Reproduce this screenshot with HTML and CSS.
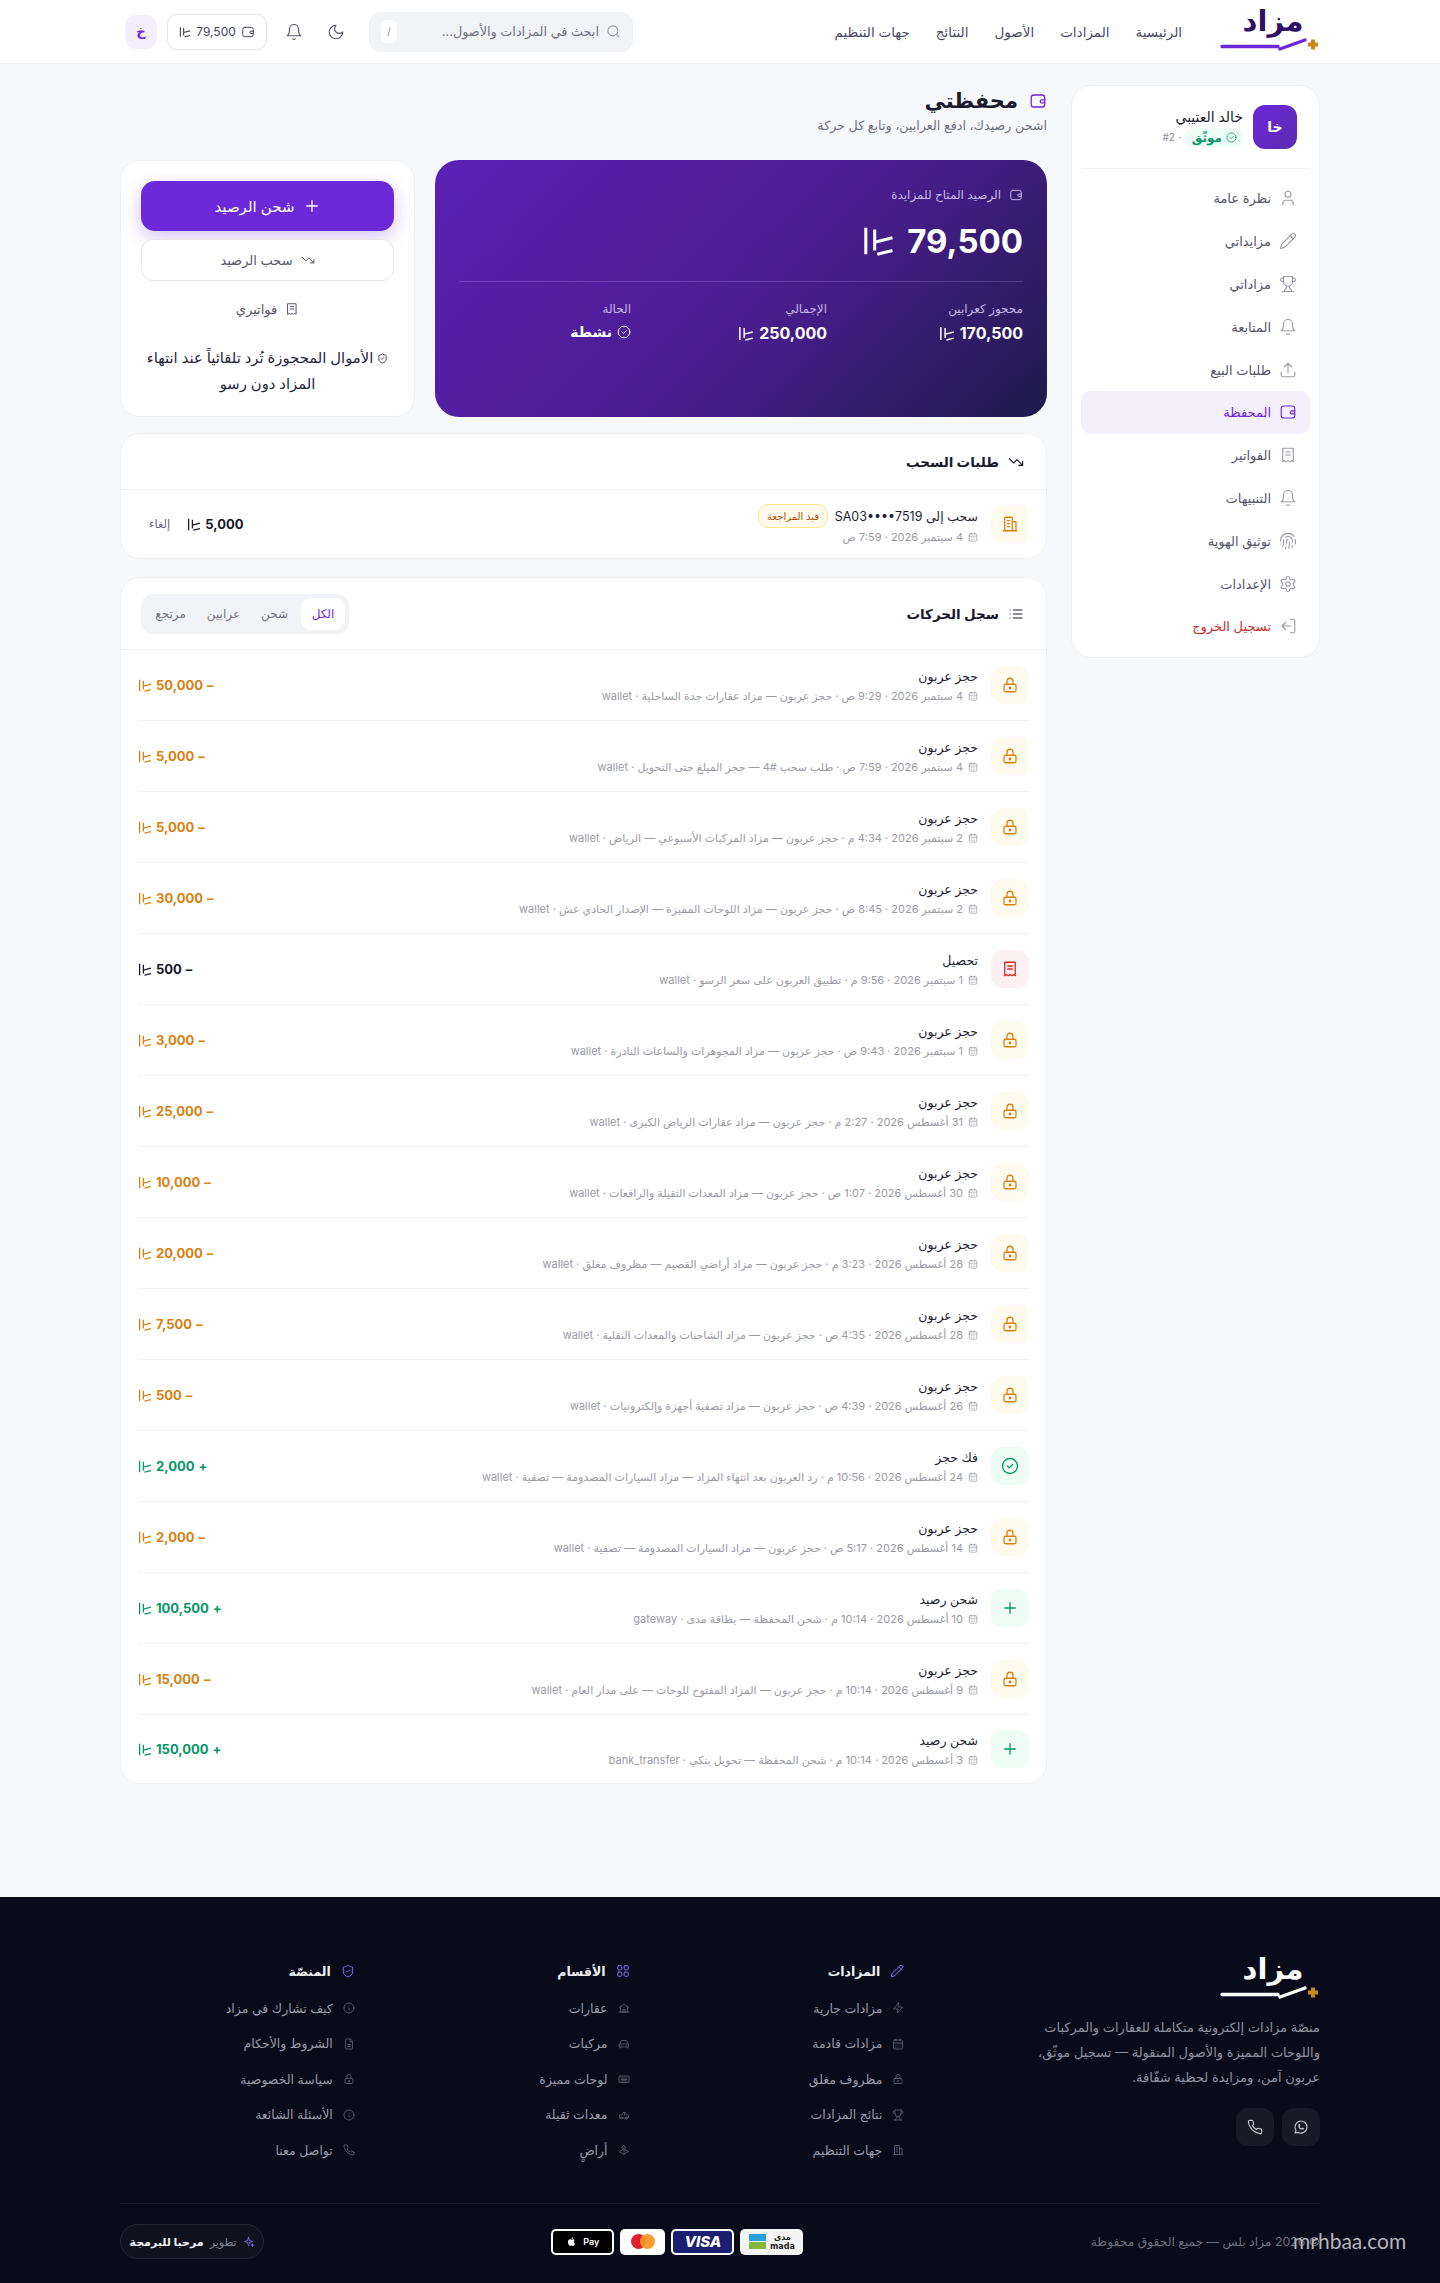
FILE: index.html
```html
<!DOCTYPE html>
<html lang="ar" dir="rtl">
<head>
  <meta charset="UTF-8" />
  <meta name="viewport" content="width=device-width, initial-scale=1.0" />
  <title>محفظتي - مزاد</title>
  <link rel="stylesheet" href="styles.css">
</head>
<body>
  <svg class="sprite" width="0" height="0" aria-hidden="true">
    <defs>
      <symbol id="i-sar" viewBox="0 0 26 24"><path d="M3 1.500v21M10 3v16.500M10 13l14-3.500M12 22.500l12-3" /></symbol>
      <symbol id="i-wallet" viewBox="0 0 24 24"><rect x="3" y="4" width="18" height="16" rx="3.500" /><path d="M21 10.500h-4a2 2 0 0 0 0 4h4" /></symbol>
      <symbol id="i-lock" viewBox="0 0 24 24"><rect x="4" y="11" width="16" height="10" rx="2" /><path d="M8 11V7a4 4 0 0 1 8 0v4" /><circle cx="12" cy="16" r="1" /></symbol>
      <symbol id="i-bell" viewBox="0 0 24 24"><path d="M6 8a6 6 0 0 1 12 0c0 7 3 9 3 9H3s3-2 3-9" /><path d="M10.300 21a1.940 1.940 0 0 0 3.400 0" /></symbol>
      <symbol id="i-moon" viewBox="0 0 24 24"><path d="M12 3a6 6 0 0 0 9 9 9 9 0 1 1-9-9Z" /></symbol>
      <symbol id="i-search" viewBox="0 0 24 24"><circle cx="11" cy="11" r="8" /><path d="m21 21-4.300-4.300" /></symbol>
      <symbol id="i-user" viewBox="0 0 24 24"><path d="M19 21v-2a4 4 0 0 0-4-4H9a4 4 0 0 0-4 4v2" /><circle cx="12" cy="7" r="4" /></symbol>
      <symbol id="i-pencil" viewBox="0 0 24 24"><path d="M17 3a2.850 2.830 0 1 1 4 4L7.500 20.500 2 22l1.500-5.500Z" /><path d="m15 5 4 4" /></symbol>
      <symbol id="i-trophy" viewBox="0 0 24 24"><path d="M6 9H4.500a2.500 2.500 0 0 1 0-5H6M18 9h1.500a2.500 2.500 0 0 0 0-5H18M4 22h16M10 15v2c0 .550-.470.980-.970 1.210C7.850 18.750 7 20.240 7 22M14 15v2c0 .550.470.980.970 1.210 1.180.540 2.030 2.030 2.030 3.790" /><path d="M18 2H6v7a6 6 0 0 0 12 0V2Z" /></symbol>
      <symbol id="i-upload" viewBox="0 0 24 24"><path d="M21 15v4a2 2 0 0 1-2 2H5a2 2 0 0 1-2-2v-4M17 8l-5-5-5 5M12 3v12" /></symbol>
      <symbol id="i-receipt" viewBox="0 0 24 24"><path d="M5 3h14v18l-2.300-1.500-2.300 1.500-2.400-1.500L9.600 21l-2.300-1.500L5 21Z" /><path d="M9 8h6M9 12h6" /></symbol>
      <symbol id="i-finger" viewBox="0 0 24 24"><path d="M12 10a2 2 0 0 0-2 2c0 1.020-.1 2.510-.260 4M14 13.120c0 2.380 0 6.380-1 8.880M17.290 21.020c.120-.6.430-2.300.5-3.020M2 12a10 10 0 0 1 18-6M2 16h.01M21.800 16c.2-2 .131-5.354 0-6M5 19.500C5.500 18 6 15 6 12a6 6 0 0 1 .340-2M8.650 22c.210-.660.450-1.320.570-2M9 6.800a6 6 0 0 1 9 5.200v2" /></symbol>
      <symbol id="i-gear" viewBox="0 0 24 24"><path d="M12.220 2h-.440a2 2 0 0 0-2 2v.180a2 2 0 0 1-1 1.730l-.430.250a2 2 0 0 1-2 0l-.150-.080a2 2 0 0 0-2.730.730l-.220.380a2 2 0 0 0 .730 2.730l.150.1a2 2 0 0 1 1 1.720v.510a2 2 0 0 1-1 1.740l-.150.090a2 2 0 0 0-.730 2.730l.220.380a2 2 0 0 0 2.730.730l.150-.080a2 2 0 0 1 2 0l.430.250a2 2 0 0 1 1 1.730V20a2 2 0 0 0 2 2h.440a2 2 0 0 0 2-2v-.180a2 2 0 0 1 1-1.730l.430-.250a2 2 0 0 1 2 0l.150.080a2 2 0 0 0 2.730-.730l.220-.390a2 2 0 0 0-.730-2.730l-.150-.080a2 2 0 0 1-1-1.740v-.5a2 2 0 0 1 1-1.740l.150-.090a2 2 0 0 0 .730-2.730l-.220-.380a2 2 0 0 0-2.730-.730l-.150.080a2 2 0 0 1-2 0l-.430-.250a2 2 0 0 1-1-1.730V4a2 2 0 0 0-2-2z" /><circle cx="12" cy="12" r="3" /></symbol>
      <symbol id="i-logout" viewBox="0 0 24 24"><path d="M15 3h4a2 2 0 0 1 2 2v14a2 2 0 0 1-2 2h-4M9 17l-5-5 5-5M4 12h12" /></symbol>
      <symbol id="i-plus" viewBox="0 0 24 24"><path d="M5 12h14M12 5v14" /></symbol>
      <symbol id="i-trend" viewBox="0 0 24 24"><path d="m22 17-8.500-8.500-5 5L2 7M16 17h6v-6" /></symbol>
      <symbol id="i-list" viewBox="0 0 24 24"><path d="M8 6h13M8 12h13M8 18h13M3 6h.01M3 12h.01M3 18h.01" /></symbol>
      <symbol id="i-building" viewBox="0 0 24 24"><path d="M5 21V4a1 1 0 0 1 1-1h8a1 1 0 0 1 1 1v17M15 9h4a1 1 0 0 1 1 1v11M3 21h18M8.500 7.500h3M8.500 11.500h3M8.500 15.500h3" /></symbol>
      <symbol id="i-check" viewBox="0 0 24 24"><circle cx="12" cy="12" r="10" /><path d="m8.500 12 2.500 2.500 4.500-4.500" /></symbol>
      <symbol id="i-cal" viewBox="0 0 24 24"><rect x="3" y="4" width="18" height="18" rx="2" /><path d="M16 2v4M8 2v4M3 10h18M8 14h.01M12 14h.01M16 14h.01M8 18h.01M12 18h.01M16 18h.01" /></symbol>
      <symbol id="i-shield" viewBox="0 0 24 24"><path d="M20 13c0 5-3.500 7.500-7.660 8.950a1 1 0 0 1-.670-.010C7.500 20.500 4 18 4 13V6a1 1 0 0 1 1-1c2 0 4.500-1.200 6.240-2.720a1.170 1.170 0 0 1 1.520 0C14.510 3.810 17 5 19 5a1 1 0 0 1 1 1z" /><path d="m9 12 2 2 4-4" /></symbol>
      <symbol id="i-phone" viewBox="0 0 24 24"><path d="M22 16.920v3a2 2 0 0 1-2.180 2 19.790 19.790 0 0 1-8.630-3.070 19.500 19.500 0 0 1-6-6 19.790 19.790 0 0 1-3.070-8.670A2 2 0 0 1 4.110 2h3a2 2 0 0 1 2 1.720c.127.960.361 1.903.7 2.810a2 2 0 0 1-.450 2.110L8.090 9.910a16 16 0 0 0 6 6l1.270-1.270a2 2 0 0 1 2.110-.450c.907.339 1.850.573 2.810.7A2 2 0 0 1 22 16.920z" /></symbol>
      <symbol id="i-whatsapp" viewBox="0 0 24 24"><path d="m3 21 1.650-3.800a9 9 0 1 1 3.400 2.900L3 21" /><path d="M9 10a.5.5 0 0 0 1 0V9a.5.5 0 0 0-1 0v1a5 5 0 0 0 5 5h1a.5.5 0 0 0 0-1h-1a.5.5 0 0 0 0 1" /></symbol>
      <symbol id="i-zap" viewBox="0 0 24 24"><path d="M13 2 3 14h9l-1 8 10-12h-9l1-8z" /></symbol>
      <symbol id="i-grid" viewBox="0 0 24 24"><rect x="3" y="3" width="7" height="7" rx="1.500" /><rect x="14" y="3" width="7" height="7" rx="1.500" /><rect x="3" y="14" width="7" height="7" rx="1.500" /><rect x="14" y="14" width="7" height="7" rx="1.500" /></symbol>
      <symbol id="i-home" viewBox="0 0 24 24"><path d="M3 11 12 4l9 7M5 10v10h14V10M2 20h20M10 20v-5h4v5" /></symbol>
      <symbol id="i-car" viewBox="0 0 24 24"><path d="M4 12 6 6a2 2 0 0 1 2-1h8a2 2 0 0 1 2 1l2 6M3 12h18v6H3zM5 18v2M19 18v2M7 15h.01M17 15h.01" /></symbol>
      <symbol id="i-plate" viewBox="0 0 24 24"><rect x="2" y="6" width="20" height="13" rx="2" /><path d="M6 10h12M6 13h12M6 16h12" /></symbol>
      <symbol id="i-truck" viewBox="0 0 24 24"><path d="M3 17v-5h4l3-5h5l2 5h4v5zM13 7v5" /><circle cx="7" cy="18" r="2" /><circle cx="17" cy="18" r="2" /></symbol>
      <symbol id="i-land" viewBox="0 0 24 24"><path d="m12 3 4 5H8zM3 15l9-5 9 5-9 5zM12 10v10" /></symbol>
      <symbol id="i-info" viewBox="0 0 24 24"><circle cx="12" cy="12" r="10" /><path d="M12 16v-4M12 8h.01" /></symbol>
      <symbol id="i-file" viewBox="0 0 24 24"><path d="M14 2H7a2 2 0 0 0-2 2v16a2 2 0 0 0 2 2h10a2 2 0 0 0 2-2V7zM14 2v5h5M9 13h6M9 17h6" /></symbol>
      <symbol id="i-spark" viewBox="0 0 24 24"><path d="m11 3 2 6 6 2-6 2-2 6-2-6-6-2 6-2zM19 16v5M16.500 18.500h5" /></symbol>
      <symbol id="i-logo" viewBox="0 0 100 14"><path class="logo-line" d="M2 8.500h56M60 11l25-9" /><path class="logo-plus" d="M88 4.500h3v-3h4v3h3v4h-3v3h-4v-3h-3z" /></symbol>
    </defs>
  </svg>

  <header class="topbar">
    <div class="wrap topbar-inner">
      <a class="logo">
        <span class="logo-word">مزاد</span>
        <svg class="logo-mark"><use href="#i-logo" /></svg>
      </a>
      <nav class="topnav">
        <a>الرئيسية</a>
        <a>المزادات</a>
        <a>الأصول</a>
        <a>النتائج</a>
        <a>جهات التنظيم</a>
      </nav>
      <div class="tools">
        <div class="search">
          <svg class="ic"><use href="#i-search" /></svg>
          <span class="search-text">ابحث في المزادات والأصول...</span>
          <kbd>/</kbd>
        </div>
        <svg class="ic tool-ic"><use href="#i-moon" /></svg>
        <svg class="ic tool-ic"><use href="#i-bell" /></svg>
        <div class="bal-pill">
          <svg class="ic"><use href="#i-wallet" /></svg>
          <span>79,500</span>
          <svg class="sar"><use href="#i-sar" /></svg>
        </div>
        <div class="me-chip">خ</div>
      </div>
    </div>
  </header>

  <main class="wrap page">
    <aside class="side card">
      <div class="side-user">
        <div class="avatar">خا</div>
        <div>
          <div class="side-name">خالد العتيبي</div>
          <div class="side-sub">
            <span class="ok-badge"><svg class="ic"><use href="#i-check" /></svg>موثّق</span>
            <span>·</span>
            <span dir="ltr">#2</span>
          </div>
        </div>
      </div>
      <nav class="side-nav">
        <a><svg class="ic"><use href="#i-user" /></svg>نظرة عامة</a>
        <a><svg class="ic"><use href="#i-pencil" /></svg>مزايداتي</a>
        <a><svg class="ic"><use href="#i-trophy" /></svg>مزاداتي</a>
        <a><svg class="ic"><use href="#i-bell" /></svg>المتابعة</a>
        <a><svg class="ic"><use href="#i-upload" /></svg>طلبات البيع</a>
        <a class="active"><svg class="ic"><use href="#i-wallet" /></svg>المحفظة</a>
        <a><svg class="ic"><use href="#i-receipt" /></svg>الفواتير</a>
        <a><svg class="ic"><use href="#i-bell" /></svg>التنبيهات</a>
        <a><svg class="ic"><use href="#i-finger" /></svg>توثيق الهوية</a>
        <a><svg class="ic"><use href="#i-gear" /></svg>الإعدادات</a>
        <a class="logout"><svg class="ic"><use href="#i-logout" /></svg>تسجيل الخروج</a>
      </nav>
    </aside>

    <div class="content">
      <div class="page-head">
        <h1><svg class="ic"><use href="#i-wallet" /></svg>محفظتي</h1>
        <p>اشحن رصيدك، ادفع العرابين، وتابع كل حركة</p>
      </div>

      <div class="bal-grid">
        <section class="bal-card">
          <div class="bal-label"><svg class="ic"><use href="#i-wallet" /></svg>الرصيد المتاح للمزايدة</div>
          <div class="bal-num">79,500 <svg class="sar"><use href="#i-sar" /></svg></div>
          <div class="bal-stats">
            <div>
              <span>محجوز كعرابين</span>
              <b>170,500 <svg class="sar"><use href="#i-sar" /></svg></b>
            </div>
            <div>
              <span>الإجمالي</span>
              <b>250,000 <svg class="sar"><use href="#i-sar" /></svg></b>
            </div>
            <div>
              <span>الحالة</span>
              <b class="state"><svg class="ic"><use href="#i-check" /></svg> نشطة</b>
            </div>
          </div>
        </section>
        <section class="card actions">
          <button class="btn-main"><svg class="ic"><use href="#i-plus" /></svg>شحن الرصيد</button>
          <button class="btn-line"><svg class="ic"><use href="#i-trend" /></svg>سحب الرصيد</button>
          <a class="inv-link"><svg class="ic"><use href="#i-receipt" /></svg>فواتيري</a>
          <p class="note"><svg class="ic"><use href="#i-shield" /></svg> الأموال المحجوزة تُرد تلقائياً عند انتهاء المزاد دون رسو</p>
        </section>
      </div>

      <section class="card panel">
        <div class="panel-head">
          <h2><svg class="ic"><use href="#i-trend" /></svg>طلبات السحب</h2>
        </div>
        <div class="row row-wd">
          <div class="row-ic amber"><svg class="ic"><use href="#i-building" /></svg></div>
          <div class="row-body">
            <div class="row-title">سحب إلى SA03••••7519 <span class="wait">قيد المراجعة</span></div>
            <div class="row-meta"><svg class="ic"><use href="#i-cal" /></svg>4 سبتمبر 2026 · 7:59 ص</div>
          </div>
          <div class="amt dark"><span>5,000</span><svg class="sar"><use href="#i-sar" /></svg></div>
          <a class="cancel">إلغاء</a>
        </div>
      </section>

      <section class="card panel">
        <div class="panel-head panel-head-tall">
          <h2><svg class="ic"><use href="#i-list" /></svg>سجل الحركات</h2>
          <div class="tabs">
            <a class="on">الكل</a>
            <a>شحن</a>
            <a>عرابين</a>
            <a>مرتجع</a>
          </div>
        </div>
        <div class="tx-list">
          <div class="row"><div class="row-ic amber"><svg class="ic"><use href="#i-lock" /></svg></div><div class="row-body"><div class="row-title">حجز عربون</div><div class="row-meta"><svg class="ic"><use href="#i-cal" /></svg>4 سبتمبر 2026 · 9:29 ص · حجز عربون — مزاد عقارات جدة الساحلية · wallet</div></div><div class="amt out"><span>–</span><span>50,000</span><svg class="sar"><use href="#i-sar" /></svg></div></div>
          <div class="row"><div class="row-ic amber"><svg class="ic"><use href="#i-lock" /></svg></div><div class="row-body"><div class="row-title">حجز عربون</div><div class="row-meta"><svg class="ic"><use href="#i-cal" /></svg>4 سبتمبر 2026 · 7:59 ص · طلب سحب #4 — حجز المبلغ حتى التحويل · wallet</div></div><div class="amt out"><span>–</span><span>5,000</span><svg class="sar"><use href="#i-sar" /></svg></div></div>
          <div class="row"><div class="row-ic amber"><svg class="ic"><use href="#i-lock" /></svg></div><div class="row-body"><div class="row-title">حجز عربون</div><div class="row-meta"><svg class="ic"><use href="#i-cal" /></svg>2 سبتمبر 2026 · 4:34 م · حجز عربون — مزاد المركبات الأسبوعي — الرياض · wallet</div></div><div class="amt out"><span>–</span><span>5,000</span><svg class="sar"><use href="#i-sar" /></svg></div></div>
          <div class="row"><div class="row-ic amber"><svg class="ic"><use href="#i-lock" /></svg></div><div class="row-body"><div class="row-title">حجز عربون</div><div class="row-meta"><svg class="ic"><use href="#i-cal" /></svg>2 سبتمبر 2026 · 8:45 ص · حجز عربون — مزاد اللوحات المميزة — الإصدار الحادي عش · wallet</div></div><div class="amt out"><span>–</span><span>30,000</span><svg class="sar"><use href="#i-sar" /></svg></div></div>
          <div class="row"><div class="row-ic red"><svg class="ic"><use href="#i-receipt" /></svg></div><div class="row-body"><div class="row-title">تحصيل</div><div class="row-meta"><svg class="ic"><use href="#i-cal" /></svg>1 سبتمبر 2026 · 9:56 م · تطبيق العربون على سعر الرسو · wallet</div></div><div class="amt dark"><span>–</span><span>500</span><svg class="sar"><use href="#i-sar" /></svg></div></div>
          <div class="row"><div class="row-ic amber"><svg class="ic"><use href="#i-lock" /></svg></div><div class="row-body"><div class="row-title">حجز عربون</div><div class="row-meta"><svg class="ic"><use href="#i-cal" /></svg>1 سبتمبر 2026 · 9:43 ص · حجز عربون — مزاد المجوهرات والساعات النادرة · wallet</div></div><div class="amt out"><span>–</span><span>3,000</span><svg class="sar"><use href="#i-sar" /></svg></div></div>
          <div class="row"><div class="row-ic amber"><svg class="ic"><use href="#i-lock" /></svg></div><div class="row-body"><div class="row-title">حجز عربون</div><div class="row-meta"><svg class="ic"><use href="#i-cal" /></svg>31 أغسطس 2026 · 2:27 م · حجز عربون — مزاد عقارات الرياض الكبرى · wallet</div></div><div class="amt out"><span>–</span><span>25,000</span><svg class="sar"><use href="#i-sar" /></svg></div></div>
          <div class="row"><div class="row-ic amber"><svg class="ic"><use href="#i-lock" /></svg></div><div class="row-body"><div class="row-title">حجز عربون</div><div class="row-meta"><svg class="ic"><use href="#i-cal" /></svg>30 أغسطس 2026 · 1:07 ص · حجز عربون — مزاد المعدات الثقيلة والرافعات · wallet</div></div><div class="amt out"><span>–</span><span>10,000</span><svg class="sar"><use href="#i-sar" /></svg></div></div>
          <div class="row"><div class="row-ic amber"><svg class="ic"><use href="#i-lock" /></svg></div><div class="row-body"><div class="row-title">حجز عربون</div><div class="row-meta"><svg class="ic"><use href="#i-cal" /></svg>28 أغسطس 2026 · 3:23 م · حجز عربون — مزاد أراضي القصيم — مظروف مغلق · wallet</div></div><div class="amt out"><span>–</span><span>20,000</span><svg class="sar"><use href="#i-sar" /></svg></div></div>
          <div class="row"><div class="row-ic amber"><svg class="ic"><use href="#i-lock" /></svg></div><div class="row-body"><div class="row-title">حجز عربون</div><div class="row-meta"><svg class="ic"><use href="#i-cal" /></svg>28 أغسطس 2026 · 4:35 ص · حجز عربون — مزاد الشاحنات والمعدات النقلية · wallet</div></div><div class="amt out"><span>–</span><span>7,500</span><svg class="sar"><use href="#i-sar" /></svg></div></div>
          <div class="row"><div class="row-ic amber"><svg class="ic"><use href="#i-lock" /></svg></div><div class="row-body"><div class="row-title">حجز عربون</div><div class="row-meta"><svg class="ic"><use href="#i-cal" /></svg>26 أغسطس 2026 · 4:39 ص · حجز عربون — مزاد تصفية أجهزة وإلكترونيات · wallet</div></div><div class="amt out"><span>–</span><span>500</span><svg class="sar"><use href="#i-sar" /></svg></div></div>
          <div class="row"><div class="row-ic green"><svg class="ic"><use href="#i-check" /></svg></div><div class="row-body"><div class="row-title">فك حجز</div><div class="row-meta"><svg class="ic"><use href="#i-cal" /></svg>24 أغسطس 2026 · 10:56 م · رد العربون بعد انتهاء المزاد — مزاد السيارات المصدومة — تصفية · wallet</div></div><div class="amt in"><span>+</span><span>2,000</span><svg class="sar"><use href="#i-sar" /></svg></div></div>
          <div class="row"><div class="row-ic amber"><svg class="ic"><use href="#i-lock" /></svg></div><div class="row-body"><div class="row-title">حجز عربون</div><div class="row-meta"><svg class="ic"><use href="#i-cal" /></svg>14 أغسطس 2026 · 5:17 ص · حجز عربون — مزاد السيارات المصدومة — تصفية · wallet</div></div><div class="amt out"><span>–</span><span>2,000</span><svg class="sar"><use href="#i-sar" /></svg></div></div>
          <div class="row"><div class="row-ic green"><svg class="ic"><use href="#i-plus" /></svg></div><div class="row-body"><div class="row-title">شحن رصيد</div><div class="row-meta"><svg class="ic"><use href="#i-cal" /></svg>10 أغسطس 2026 · 10:14 م · شحن المحفظة — بطاقة مدى · gateway</div></div><div class="amt in"><span>+</span><span>100,500</span><svg class="sar"><use href="#i-sar" /></svg></div></div>
          <div class="row"><div class="row-ic amber"><svg class="ic"><use href="#i-lock" /></svg></div><div class="row-body"><div class="row-title">حجز عربون</div><div class="row-meta"><svg class="ic"><use href="#i-cal" /></svg>9 أغسطس 2026 · 10:14 م · حجز عربون — المزاد المفتوح للوحات — على مدار العام · wallet</div></div><div class="amt out"><span>–</span><span>15,000</span><svg class="sar"><use href="#i-sar" /></svg></div></div>
          <div class="row"><div class="row-ic green"><svg class="ic"><use href="#i-plus" /></svg></div><div class="row-body"><div class="row-title">شحن رصيد</div><div class="row-meta"><svg class="ic"><use href="#i-cal" /></svg>3 أغسطس 2026 · 10:14 م · شحن المحفظة — تحويل بنكي · bank_transfer</div></div><div class="amt in"><span>+</span><span>150,000</span><svg class="sar"><use href="#i-sar" /></svg></div></div>
        </div>
      </section>
    </div>
  </main>

  <footer class="footer">
    <div class="wrap">
      <div class="foot-grid">
        <div class="foot-brand">
          <a class="logo logo-light">
            <span class="logo-word">مزاد</span>
            <svg class="logo-mark"><use href="#i-logo" /></svg>
          </a>
          <p>منصّة مزادات إلكترونية متكاملة للعقارات والمركبات واللوحات المميزة والأصول المنقولة — تسجيل موثّق، عربون آمن، ومزايدة لحظية شفّافة.</p>
          <div class="socials">
            <a><svg class="ic"><use href="#i-whatsapp" /></svg></a>
            <a><svg class="ic"><use href="#i-phone" /></svg></a>
          </div>
        </div>
        <div class="foot-col">
          <h3><svg class="ic"><use href="#i-pencil" /></svg>المزادات</h3>
          <a><svg class="ic"><use href="#i-zap" /></svg>مزادات جارية</a>
          <a><svg class="ic"><use href="#i-cal" /></svg>مزادات قادمة</a>
          <a><svg class="ic"><use href="#i-lock" /></svg>مظروف مغلق</a>
          <a><svg class="ic"><use href="#i-trophy" /></svg>نتائج المزادات</a>
          <a><svg class="ic"><use href="#i-building" /></svg>جهات التنظيم</a>
        </div>
        <div class="foot-col">
          <h3><svg class="ic"><use href="#i-grid" /></svg>الأقسام</h3>
          <a><svg class="ic"><use href="#i-home" /></svg>عقارات</a>
          <a><svg class="ic"><use href="#i-car" /></svg>مركبات</a>
          <a><svg class="ic"><use href="#i-plate" /></svg>لوحات مميزة</a>
          <a><svg class="ic"><use href="#i-truck" /></svg>معدات ثقيلة</a>
          <a><svg class="ic"><use href="#i-land" /></svg>أراضٍ</a>
        </div>
        <div class="foot-col">
          <h3><svg class="ic"><use href="#i-shield" /></svg>المنصّة</h3>
          <a><svg class="ic"><use href="#i-info" /></svg>كيف تشارك في مزاد</a>
          <a><svg class="ic"><use href="#i-file" /></svg>الشروط والأحكام</a>
          <a><svg class="ic"><use href="#i-lock" /></svg>سياسة الخصوصية</a>
          <a><svg class="ic"><use href="#i-info" /></svg>الأسئلة الشائعة</a>
          <a><svg class="ic"><use href="#i-phone" /></svg>تواصل معنا</a>
        </div>
      </div>
      <div class="foot-bottom">
        <span class="copy">© 2026 مزاد بلس — جميع الحقوق محفوظة</span>
        <div class="pays">
          <div class="pay pay-mada">
            <span class="mada-flag"><i></i><i></i></span>
            <span class="mada-txt">مدى<br>mada</span>
          </div>
          <div class="pay pay-visa">VISA</div>
          <div class="pay pay-mc"><i></i><i></i></div>
          <div class="pay pay-apple"><span>Pay</span><svg viewBox="0 0 24 24"><path d="M17 12.500c0-2.300 1.900-3.400 2-3.500-1.100-1.600-2.800-1.800-3.400-1.800-1.400-.1-2.800.9-3.500.9s-1.900-.9-3.100-.8c-1.600 0-3.100.9-3.900 2.300-1.700 2.900-.4 7.200 1.200 9.500.8 1.100 1.700 2.400 3 2.400 1.200 0 1.700-.8 3.100-.8 1.500 0 1.900.8 3.100.8 1.300 0 2.100-1.200 2.900-2.300.9-1.300 1.300-2.600 1.300-2.700 0 0-2.700-1-2.700-4zM14.700 5.600c.6-.8 1.100-1.900 1-3-.9 0-2.100.6-2.700 1.400-.6.700-1.100 1.800-1 2.800 1 .1 2-.5 2.700-1.200z" /></svg></div>
        </div>
        <div class="dev-pill"><svg class="ic"><use href="#i-spark" /></svg><span>تطوير</span><b>مرحبا للبرمجة</b></div>
      </div>
    </div>
    <span class="watermark">mrhbaa.com</span>
  </footer>
</body>
</html>
```

FILE: styles.css
```css
* {
  box-sizing: border-box;
}
body {
  margin: 0;
  background: #f7f8fb;
  color: #1a1a2e;
  font-family: "Inter", "DejaVu Sans", sans-serif;
  font-size: 13px;
}
a {
  color: inherit;
  text-decoration: none;
}
.sprite {
  position: absolute;
}
.wrap {
  width: 1200px;
  margin: 0 auto;
}
.ic {
  width: 18px;
  height: 18px;
  flex-shrink: 0;
  fill: none;
  stroke: currentColor;
  stroke-width: 1.7;
  stroke-linecap: round;
  stroke-linejoin: round;
}
.sar {
  width: 14px;
  height: 13px;
  flex-shrink: 0;
  fill: none;
  stroke: currentColor;
  stroke-width: 2.4;
}

/* top bar */
.topbar {
  height: 64px;
  background: #fff;
  border-bottom: 1px solid #eceef2;
}
.topbar-inner {
  display: flex;
  align-items: center;
  height: 63px;
}
.logo {
  width: 100px;
  display: flex;
  flex-direction: column;
  align-items: center;
  color: #2e1065;
}
.logo-word {
  font-size: 29px;
  font-weight: 800;
  line-height: 32px;
  margin-top: -6px;
  padding-left: 6px;
}
.logo-mark {
  width: 100px;
  height: 14px;
  margin-top: 1px;
}
.logo-line {
  fill: none;
  stroke: var(--line, #6d28d9);
  stroke-width: 3.4;
  stroke-linecap: round;
  stroke-linejoin: round;
}
.logo-plus {
  fill: #c8891a;
}
.logo-light {
  color: #fff;
  --line: #fff;
}
.topnav {
  display: flex;
  gap: 26px;
  margin-right: 38px;
  font-size: 13.5px;
  color: #4b4b63;
}
.tools {
  display: flex;
  align-items: center;
  margin-right: auto;
  padding-left: 5px;
  color: #55556b;
}
.search {
  width: 264px;
  height: 40px;
  display: flex;
  align-items: center;
  gap: 7px;
  padding: 0 12px;
  background: #f2f3f6;
  border-radius: 12px;
  color: #71717f;
  font-size: 12.8px;
}
.search .ic {
  width: 15px;
  height: 15px;
  color: #9a9aa6;
}
.search-text {
  flex: 1;
}
.search kbd {
  width: 16px;
  height: 23px;
  background: #fff;
  border-radius: 5px;
  font: 10px "Inter", sans-serif;
  line-height: 23px;
  text-align: center;
  color: #888;
}
.tool-ic {
  margin-right: 24px;
  width: 18px;
  height: 18px;
  stroke-width: 1.5;
}
.bal-pill {
  width: 100px;
  height: 36px;
  margin-right: 18px;
  display: flex;
  align-items: center;
  justify-content: center;
  gap: 5px;
  border: 1px solid #e3e4ea;
  border-radius: 10px;
  font-size: 12px;
  color: #44445a;
}
.bal-pill .ic {
  width: 14px;
  height: 14px;
}
.bal-pill .sar {
  width: 12px;
  height: 12px;
}
.me-chip {
  width: 32px;
  height: 34px;
  margin-right: 10px;
  background: #f3eefd;
  border-radius: 11px;
  text-align: center;
  line-height: 32px;
  color: #6d28d9;
  font-weight: 700;
  font-size: 13px;
}

/* layout */
.page {
  display: flex;
  align-items: flex-start;
  gap: 24px;
  padding: 21px 0 113px;
}
.card {
  background: #fff;
  border: 1px solid #eef0f4;
  border-radius: 20px;
}
.side {
  width: 249px;
  flex-shrink: 0;
  padding: 0 9px 9px;
}
.side-user {
  display: flex;
  align-items: center;
  gap: 10px;
  height: 83px;
  padding: 13px 13px 13px 15px;
  border-bottom: 1px solid #f0f1f4;
  margin-bottom: 8px;
}
.avatar {
  width: 44px;
  height: 44px;
  flex-shrink: 0;
  border-radius: 12px;
  background: linear-gradient(135deg, #6d28d9, #5b2bb0);
  color: #fff;
  font-weight: 700;
  font-size: 14px;
  line-height: 44px;
  text-align: center;
}
.side-name {
  font-size: 14px;
  font-weight: 500;
  margin-bottom: 3px;
}
.side-sub {
  display: flex;
  align-items: center;
  gap: 4px;
  font-size: 10px;
  color: #8d8d9b;
}
.ok-badge {
  display: inline-flex;
  align-items: center;
  gap: 4px;
  padding: 2px 6px;
  background: #ecfdf5;
  color: #059669;
  font-weight: 700;
  font-size: 12px;
  border-radius: 7px;
}
.ok-badge .ic {
  width: 11px;
  height: 11px;
}
.side-nav a {
  display: flex;
  align-items: center;
  gap: 8px;
  height: 42.8px;
  padding: 0 13px;
  border-radius: 10px;
  font-size: 13px;
  color: #55556b;
}
.side-nav .ic {
  color: #9a9aa6;
  stroke-width: 1.5;
}
.side-nav .active {
  background: #f3effd;
  color: #6d28d9;
}
.side-nav .active .ic {
  color: #6d28d9;
}
.side-nav .logout {
  color: #c53030;
}
.content {
  flex: 1;
  min-width: 0;
}
.page-head {
  height: 75px;
}
.page-head h1 {
  display: flex;
  align-items: center;
  gap: 11px;
  margin: 0;
  font-size: 21px;
  font-weight: 800;
  line-height: 32px;
}
.page-head h1 .ic {
  color: #6d28d9;
}
.page-head p {
  margin: 1px 0 0;
  font-size: 12.7px;
  color: #71717f;
}

/* balance */
.bal-grid {
  display: grid;
  grid-template-columns: 1fr 295px;
  gap: 20px;
  margin-bottom: 16px;
}
.bal-card {
  height: 257px;
  padding: 27px 24px;
  border-radius: 24px;
  color: #fff;
  background: linear-gradient(135deg, #5b21b6 0%, #4a1d8f 55%, #1e1b4b 100%);
}
.bal-label {
  display: flex;
  align-items: center;
  gap: 8px;
  font-size: 12px;
  color: #c7b7e8;
}
.bal-label .ic {
  width: 14px;
  height: 14px;
}
.bal-num {
  display: flex;
  align-items: center;
  gap: 12px;
  margin-top: 17px;
  height: 44px;
  font-size: 33px;
  font-weight: 700;
}
.bal-num .sar {
  width: 33px;
  height: 36px;
}
.bal-stats {
  display: grid;
  grid-template-columns: repeat(3, 1fr);
  gap: 24px;
  margin-top: 18px;
  padding-top: 19px;
  border-top: 1px solid rgba(255, 255, 255, .16);
}
.bal-stats span {
  display: block;
  font-size: 12px;
  color: #c7b7e8;
  margin-bottom: 7px;
}
.bal-stats b {
  display: flex;
  align-items: center;
  gap: 5px;
  font-size: 16px;
  font-weight: 700;
}
.bal-stats .state {
  font-size: 14px;
}
.bal-stats .sar {
  width: 16px;
  height: 15px;
}
.bal-stats .ic {
  width: 14px;
  height: 14px;
}
.actions {
  height: 257px;
  padding: 20px;
  text-align: center;
}
.btn-main,
.btn-line {
  width: 100%;
  display: flex;
  align-items: center;
  justify-content: center;
  gap: 8px;
  font-family: inherit;
  cursor: pointer;
}
.btn-main {
  height: 50px;
  border: 0;
  border-radius: 14px;
  background: #6d28d9;
  color: #fff;
  font-size: 15px;
  box-shadow: 0 6px 18px rgba(109, 40, 217, .28);
}
.btn-line {
  height: 42px;
  margin-top: 8px;
  border: 1px solid #e6e7ec;
  border-radius: 12px;
  background: #fff;
  color: #55556b;
  font-size: 13px;
}
.btn-line .ic {
  width: 14px;
  height: 14px;
}
.inv-link {
  display: flex;
  align-items: center;
  justify-content: center;
  gap: 8px;
  margin-top: 20px;
  font-size: 13px;
  color: #55556b;
}
.inv-link .ic {
  width: 14px;
  height: 14px;
}
.note {
  margin: 28px -2px 0;
  font-size: 14.8px;
  font-weight: 500;
  line-height: 26px;
  color: #26263a;
}
.note .ic {
  width: 11px;
  height: 11px;
  vertical-align: -1px;
}

/* panels */
.panel {
  margin-bottom: 18px;
  overflow: hidden;
}
.panel:last-child {
  margin-bottom: 0;
}
.panel-head {
  display: flex;
  align-items: center;
  justify-content: space-between;
  height: 56px;
  padding: 0 22px 0 20px;
  border-bottom: 1px solid #eef0f4;
}
.panel-head-tall {
  height: 72px;
}
.panel-head h2 {
  display: flex;
  align-items: center;
  gap: 9px;
  margin: 0;
  font-size: 13.5px;
  font-weight: 700;
}
.panel-head h2 .ic {
  width: 16px;
  height: 16px;
}
.tabs {
  display: flex;
  align-items: center;
  gap: 21px;
  height: 40px;
  width: 208px;
  padding: 4px;
  background: #f2f3f6;
  border-radius: 12px;
  font-size: 12px;
  color: #71717f;
}
.tabs .on {
  width: 44px;
  height: 32px;
  margin-left: -8px;
  background: #fff;
  border-radius: 10px;
  color: #6d28d9;
  font-weight: 500;
  line-height: 32px;
  text-align: center;
}
.tx-list {
  padding: 0 17px;
}
.row {
  display: flex;
  align-items: center;
  gap: 13px;
  height: 71px;
  border-bottom: 1px solid #f0f1f4;
}
.tx-list .row:last-child {
  height: 68px;
  border-bottom: 0;
}
.row-wd {
  height: 68px;
  padding: 0 17px 0 28px;
  border-bottom: 0;
}
.row-ic {
  width: 38px;
  height: 38px;
  flex-shrink: 0;
  display: flex;
  align-items: center;
  justify-content: center;
  border-radius: 12px;
}
.amber {
  background: #fffaee;
  color: #d9800f;
}
.red {
  background: #fdf0f2;
  color: #dc2626;
}
.green {
  background: #edfcf5;
  color: #059669;
}
.row-body {
  flex: 1;
  min-width: 0;
}
.row-title {
  font-size: 12.5px;
  font-weight: 400;
  color: #1f1f33;
  line-height: 20px;
}
.row-meta {
  display: flex;
  align-items: center;
  gap: 5px;
  margin-top: 2px;
  font-size: 11px;
  color: #9a9aa6;
  white-space: nowrap;
}
.row-meta .ic {
  width: 10px;
  height: 10px;
}
.wait {
  display: inline-block;
  margin-right: 3px;
  padding: 1px 8px;
  background: #fffaeb;
  border: 1px solid #fde68a;
  border-radius: 10px;
  color: #b45309;
  font-size: 10px;
  vertical-align: 1px;
}
.amt {
  display: flex;
  align-items: center;
  gap: 4px;
  font-size: 13px;
  font-weight: 700;
}
.amt .sar {
  width: 14px;
  height: 13px;
}
.out {
  color: #d9800f;
}
.in {
  color: #059669;
}
.dark {
  color: #16162a;
}
.cancel {
  font-size: 11.5px;
  color: #66667a;
  margin-right: 4px;
}

/* footer */
.footer {
  position: relative;
  height: 386px;
  padding-top: 64px;
  background: #0a0b1a;
  color: #9a9aa8;
}
.foot-grid {
  display: grid;
  grid-template-columns: 1.6fr 1fr 1fr 1fr;
  gap: 40px;
  height: 242px;
}
.foot-brand .logo {
  margin-top: -2px;
}
.foot-brand p {
  margin: 15px 0 0;
  width: 290px;
  font-size: 13px;
  line-height: 25px;
  color: #8f909e;
}
.socials {
  display: flex;
  gap: 8px;
  margin-top: 18px;
}
.socials a {
  width: 38px;
  height: 38px;
  display: flex;
  align-items: center;
  justify-content: center;
  background: #191a28;
  border-radius: 12px;
  color: #c9c9d2;
}
.socials .ic {
  width: 16px;
  height: 16px;
}
.foot-col {
  display: flex;
  flex-direction: column;
  gap: 15.5px;
}
.foot-col h3 {
  display: flex;
  align-items: center;
  gap: 10px;
  height: 20px;
  margin: 0 0 1.5px;
  font-size: 12.5px;
  font-weight: 700;
  color: #f1f1f5;
}
.foot-col h3 .ic {
  width: 14px;
  height: 14px;
  color: #8b6cf0;
}
.foot-col a {
  display: flex;
  align-items: center;
  gap: 10px;
  height: 20px;
  font-size: 12.5px;
  color: #9a9aa8;
}
.foot-col a .ic {
  width: 12px;
  height: 12px;
  color: #5f6070;
}
.foot-bottom {
  display: flex;
  align-items: center;
  justify-content: space-between;
  height: 76px;
  border-top: 1px solid #181927;
}
.copy {
  font-size: 12.3px;
  color: #6e6f7d;
}
.pays {
  display: flex;
  gap: 6px;
}
.pay {
  width: 63px;
  height: 26px;
  border-radius: 5px;
  background: #fff;
  display: flex;
  align-items: center;
  justify-content: center;
}
.pay-mada {
  gap: 4px;
  direction: ltr;
  background: #f4f4f4;
}
.mada-flag i {
  display: block;
  width: 17px;
  height: 7px;
  background: #2aa0d8;
}
.mada-flag i + i {
  margin-top: 1px;
  background: #84b740;
}
.mada-txt {
  font: 700 8px/9px "DejaVu Sans", sans-serif;
  color: #222;
  text-align: center;
}
.pay-visa {
  border: 2px solid #fff;
  background: #1a1f71;
  color: #fff;
  font: italic 800 15px "Inter", sans-serif;
}
.pay-mc {
  width: 45px;
  direction: ltr;
}
.pay-mc i {
  width: 15px;
  height: 15px;
  border-radius: 50%;
  background: #e0202c;
}
.pay-mc i + i {
  margin-left: -6px;
  background: rgba(245, 150, 30, .92);
}
.pay-apple {
  gap: 6px;
  border: 2px solid #fff;
  background: #000;
  color: #fff;
  font: 600 9px "Inter", sans-serif;
}
.pay-apple svg {
  width: 11px;
  height: 11px;
  fill: #fff;
}
.dev-pill {
  width: 144px;
  height: 35px;
  display: flex;
  align-items: center;
  justify-content: center;
  gap: 6px;
  background: #11121f;
  border: 1px solid #262736;
  border-radius: 18px;
  font-size: 11px;
  color: #85858f;
}
.dev-pill .ic {
  width: 12px;
  height: 12px;
  color: #8b6cf0;
}
.dev-pill b {
  color: #f1f1f5;
}
.watermark {
  position: absolute;
  left: 1293px;
  top: 330px;
  direction: ltr;
  font: 400 21px/28px "Lato", sans-serif;
  color: #b4b4bc;
}
```
